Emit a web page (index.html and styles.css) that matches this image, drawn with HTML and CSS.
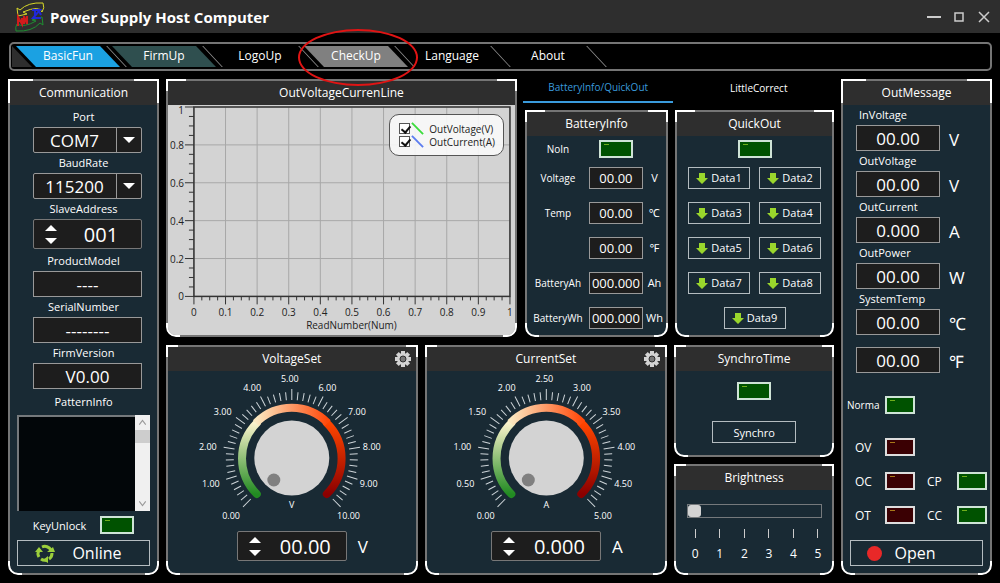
FILE: index.html
```html
<!DOCTYPE html>
<html lang="en">
<head>
  <meta charset="UTF-8">
  <title>Power Supply Host Computer</title>
  <link rel="stylesheet" href="styles.css">
</head>
<body>
  <header class="titlebar">
    <svg class="logo" viewBox="0 0 30 30" fill="none">
      <path d="M3 14 L2 6 L5 8 Q13 0 28 1 Q30 6 27 10 Q25 3 8 10 L12 12 Z" stroke="#d8d82a"/>
      <path d="M27 15 L28 23 L25 21 Q17 30 1 29 Q0 25 2 22 Q9 26 21 19 L17 18 Z" stroke="#1e8f32"/>
      <path d="M3 24 V15 L7 22 V16 M9 22 V14 L12 22 V14 M2 19 H12" stroke="#d01c1c" stroke-width="2"/>
      <path d="M17 8 H25 L18 16 H26 M20 7 V17 M23 7 L26 13" stroke="#2028d8" stroke-width="2"/>
    </svg>
    <h1>Power Supply Host Computer</h1>
    <div class="window-buttons">
      <button aria-label="Minimize"><svg viewBox="0 0 16 16"><path d="M1 8 H15" stroke-width="2"/></svg></button>
      <button aria-label="Maximize"><svg viewBox="0 0 16 16"><rect x="4" y="4" width="8" height="8"/></svg></button>
      <button aria-label="Close"><svg viewBox="0 0 16 16"><path d="M3 3 L13 13 M13 3 L3 13"/></svg></button>
    </div>
  </header>

  <nav class="menu">
    <span class="menu-start"></span>
    <ul>
      <li><button class="menu-tab active">BasicFun</button></li>
      <li><button class="menu-tab visited">FirmUp</button></li>
      <li><button class="menu-tab">LogoUp</button></li>
      <li><button class="menu-tab hover">CheckUp</button><span class="marker"></span></li>
      <li><button class="menu-tab">Language</button></li>
      <li><button class="menu-tab">About</button></li>
    </ul>
  </nav>

  <main>
    <section class="panel side comm">
      <h2>Communication</h2>
      <label for="port">Port</label>
      <div class="combo">
        <select id="port"><option>COM7</option></select>
        <svg viewBox="0 0 12 6"><path d="M0 0 H12 L6 6 Z"/></svg>
      </div>
      <label for="baud">BaudRate</label>
      <div class="combo">
        <select id="baud"><option>115200</option></select>
        <svg viewBox="0 0 12 6"><path d="M0 0 H12 L6 6 Z"/></svg>
      </div>
      <label for="slave">SlaveAddress</label>
      <div class="spin">
        <div class="spin-buttons">
          <button aria-label="Up"><svg viewBox="0 0 12 6"><path d="M0 6 H12 L6 0 Z"/></svg></button>
          <button aria-label="Down"><svg viewBox="0 0 12 6"><path d="M0 0 H12 L6 6 Z"/></svg></button>
        </div>
        <input id="slave" value="001">
      </div>
      <label for="model">ProductModel</label>
      <input class="value big" id="model" value="----" readonly>
      <label for="serial">SerialNumber</label>
      <input class="value big" id="serial" value="--------" readonly>
      <label for="firm">FirmVersion</label>
      <input class="value big" id="firm" value="V0.00" readonly>
      <label for="pattern" class="pattern-label">PatternInfo</label>
      <div class="pattern">
        <textarea id="pattern" readonly></textarea>
        <div class="scrollbar">
          <svg viewBox="0 0 14 14"><path d="M4 9 L7 5 L10 9"/></svg>
          <span class="scroll-thumb"></span>
          <svg viewBox="0 0 14 14"><path d="M4 5 L7 9 L10 5"/></svg>
        </div>
      </div>
      <div class="key-row"><span>KeyUnlock</span><span class="led"></span></div>
      <button class="box-button wide">
        <svg viewBox="0 0 20 20" fill="none" stroke="#9ccf3c" stroke-width="3">
          <path d="M4 14 A7 7 0 0 1 4 7"/>
          <path d="M7 4 A7 7 0 0 1 16 7"/>
          <path d="M17 10 A7 7 0 0 1 14 16"/>
          <path d="M12 17 A7 7 0 0 1 6 16"/>
          <path d="M0 9 L4 4 L8 9 Z M12 9 H20 L18 4 Z M13 13 V20 L8 17 Z" fill="#9ccf3c" stroke="none"/>
        </svg>
        <span>Online</span>
      </button>
    </section>

    <div class="center">
      <div class="row-top">
        <section class="panel chart-panel">
          <h2>OutVoltageCurrenLine</h2>
          <svg class="chart" id="chart" viewBox="0 0 348 229"></svg>
          <div class="legend">
            <label><input type="checkbox" checked><svg viewBox="0 0 14 14"><path d="M1 1 L13 13" stroke="#3bdc3b"/></svg>OutVoltage(V)</label>
            <label><input type="checkbox" checked><svg viewBox="0 0 14 14"><path d="M1 1 L13 13" stroke="#5b7cf0"/></svg>OutCurrent(A)</label>
          </div>
        </section>

        <div class="quick">
          <div class="tabs">
            <button class="active">BatteryInfo/QuickOut</button>
            <button>LittleCorrect</button>
          </div>
          <div class="quick-panels">
            <section class="panel">
              <h2>BatteryInfo</h2>
              <div class="battery">
                <span>NoIn</span><span class="led"></span><span></span>
                <label for="bv">Voltage</label><input class="value" id="bv" value="00.00" readonly><span>V</span>
                <label for="bc">Temp</label><input class="value" id="bc" value="00.00" readonly><span>℃</span>
                <span></span><input class="value" aria-label="Temp F" value="00.00" readonly><span>℉</span>
                <label for="bah">BatteryAh</label><input class="value" id="bah" value="000.000" readonly><span>Ah</span>
                <label for="bwh">BatteryWh</label><input class="value" id="bwh" value="000.000" readonly><span>Wh</span>
              </div>
            </section>
            <section class="panel">
              <h2>QuickOut</h2>
              <div class="data-buttons" id="dataButtons">
                <span class="led"></span>
              </div>
            </section>
          </div>
        </div>
      </div>

      <div class="row-bottom">
        <section class="panel">
          <h2>VoltageSet</h2>
          <button class="gear" aria-label="Voltage settings"></button>
          <svg class="gauge" data-max="10" data-unit="V" viewBox="0 0 236 160"></svg>
          <div class="set-row">
            <div class="spin">
              <div class="spin-buttons">
                <button aria-label="Up"><svg viewBox="0 0 12 6"><path d="M0 6 H12 L6 0 Z"/></svg></button>
                <button aria-label="Down"><svg viewBox="0 0 12 6"><path d="M0 0 H12 L6 6 Z"/></svg></button>
              </div>
              <input aria-label="Voltage" value="00.00">
            </div>
            <span>V</span>
          </div>
        </section>
        <section class="panel">
          <h2>CurrentSet</h2>
          <button class="gear" aria-label="Current settings"></button>
          <svg class="gauge" data-max="5" data-unit="A" viewBox="0 0 236 160"></svg>
          <div class="set-row">
            <div class="spin">
              <div class="spin-buttons">
                <button aria-label="Up"><svg viewBox="0 0 12 6"><path d="M0 6 H12 L6 0 Z"/></svg></button>
                <button aria-label="Down"><svg viewBox="0 0 12 6"><path d="M0 0 H12 L6 6 Z"/></svg></button>
              </div>
              <input aria-label="Current" value="0.000">
            </div>
            <span>A</span>
          </div>
        </section>
        <div class="stack">
          <section class="panel synchro">
            <h2>SynchroTime</h2>
            <span class="led"></span>
            <button class="box-button">Synchro</button>
          </section>
          <section class="panel brightness">
            <h2><label for="bright">Brightness</label></h2>
            <input type="range" id="bright" min="0" max="5" value="0">
            <div class="scale">
              <span>0</span><span>1</span><span>2</span><span>3</span><span>4</span><span>5</span>
            </div>
          </section>
        </div>
      </div>
    </div>

    <section class="panel side out">
      <h2>OutMessage</h2>
      <div class="readings">
        <label for="iv">InVoltage</label>
        <input class="value big" id="iv" value="00.00" readonly><span>V</span>
        <label for="ov">OutVoltage</label>
        <input class="value big" id="ov" value="00.00" readonly><span>V</span>
        <label for="oc">OutCurrent</label>
        <input class="value big" id="oc" value="0.000" readonly><span>A</span>
        <label for="op">OutPower</label>
        <input class="value big" id="op" value="00.00" readonly><span>W</span>
        <label for="st">SystemTemp</label>
        <input class="value big" id="st" value="00.00" readonly><span>℃</span>
        <input class="value big last" aria-label="SystemTemp F" value="00.00" readonly><span class="last">℉</span>
      </div>
      <div class="norma"><span>Norma</span><span class="led"></span></div>
      <div class="flags">
        <span>OV</span><span class="led red"></span><span></span><span></span>
        <span>OC</span><span class="led red"></span><span>CP</span><span class="led"></span>
        <span>OT</span><span class="led red"></span><span>CC</span><span class="led"></span>
      </div>
      <button class="box-button wide"><span class="dot"></span><span>Open</span></button>
    </section>
  </main>

  <script>
    // chart grid and axes
    const chart = document.getElementById('chart');
    const left = 26, right = 343, top0 = 2, bottom = 192;
    let out = '';
    for (let i = 0; i <= 40; i++) {
      const x = left + (right - left) * i / 40;
      const major = i % 4 === 0;
      if (major) {
        out += `<path class="grid" d="M${x} ${top0} V${bottom}"/>`;
        out += `<text x="${x}" y="212" text-anchor="middle">${i / 40}</text>`;
      }
      out += `<path class="tick" d="M${x} ${bottom} v${major ? 8 : 4}"/>`;
    }
    for (let i = 0; i <= 20; i++) {
      const y = bottom - (bottom - top0) * i / 20;
      const major = i % 4 === 0;
      if (major) {
        out += `<path class="grid" d="M${left} ${y} H${right}"/>`;
        out += `<text x="16" y="${Math.max(y + 4, 9)}" text-anchor="end">${i / 20}</text>`;
      }
      out += `<path class="tick" d="M${left} ${y} h${major ? -9 : -5}"/>`;
    }
    out += `<rect class="frame" x="${left}" y="${top0}" width="${right - left}" height="${bottom - top0}"/>`;
    out += '<text x="184" y="225" text-anchor="middle">ReadNumber(Num)</text>';
    chart.innerHTML = out;

    // round gauges
    document.querySelectorAll('.gauge').forEach(gauge => {
      const max = Number(gauge.dataset.max);
      const unit = gauge.dataset.unit;
      let html = `
        <defs>
          <linearGradient id="low${unit}" gradientUnits="userSpaceOnUse" x1="0" y1="36" x2="0" y2="-35">
            <stop offset="0" stop-color="#228b22"/><stop offset="1" stop-color="#fbf3cc"/>
          </linearGradient>
          <linearGradient id="mid${unit}" gradientUnits="userSpaceOnUse" x1="-35" y1="0" x2="35" y2="0">
            <stop offset="0" stop-color="#fbe8c0"/><stop offset="1" stop-color="#ff4a0c"/>
          </linearGradient>
          <linearGradient id="high${unit}" gradientUnits="userSpaceOnUse" x1="0" y1="-35" x2="0" y2="36">
            <stop offset="0" stop-color="#ff4500"/><stop offset="1" stop-color="#8b0000"/>
          </linearGradient>
        </defs>
        <g transform="translate(118 87)">
          <g fill="none" stroke-width="8">
            <path stroke-linecap="round" stroke="url(#low${unit})" d="M-35 36 A50 50 0 0 1 -35 -35"/>
            <path stroke-linecap="round" stroke="url(#high${unit})" d="M35 -35 A50 50 0 0 1 35 36"/>
            <path stroke="url(#mid${unit})" d="M-36 -35 A50 50 0 0 1 36 -35"/>
          </g>
          <circle r="37.5" fill="#d3d3d3"/>
          <circle cx="-18" cy="22" r="6.5" fill="#808080"/>
          <text y="50">${unit}</text>`;
      for (let i = 0; i <= 50; i++) {
        const a = -135 + i * 5.4;
        const major = i % 5 === 0;
        html += `<path class="gauge-tick" transform="rotate(${a})" d="M0 -58 V${major ? -69 : -66}"/>`;
        if (major) {
          const rad = a * Math.PI / 180;
          const x = 83 * Math.sin(rad) - 2;
          const y = -80 * Math.cos(rad) + 4;
          html += `<text x="${x}" y="${y}">${(max * i / 50).toFixed(2)}</text>`;
        }
      }
      gauge.innerHTML = html + '</g>';
    });

    // gear icons
    document.querySelectorAll('.gear').forEach(gear => {
      let teeth = '';
      for (let a = 0; a < 360; a += 45) {
        teeth += `<rect x="-2" y="-8" width="4" height="5" transform="rotate(${a})"/>`;
      }
      gear.innerHTML = `<svg viewBox="-8 -8 16 16" fill="#d3d3d3">${teeth}
        <circle r="6"/><circle r="3" fill="#777" stroke="#2e2e2e" stroke-width="1"/></svg>`;
    });

    // Data1 - Data9
    const dataButtons = document.getElementById('dataButtons');
    for (let i = 1; i <= 9; i++) {
      dataButtons.insertAdjacentHTML('beforeend',
        `<button class="box-button"><svg viewBox="0 0 12 12"><path d="M3 1 H9 V6 H12 L6 12 L0 6 H3 Z"/></svg>Data${i}</button>`);
    }
  </script>
</body>
</html>
```
FILE: styles.css
```css
* {
  box-sizing: border-box;
}

body {
  display: flex;
  flex-direction: column;
  min-height: 100vh;
  margin: 0;
  background-color: #000;
  color: #fff;
  font-family: "Open Sans", "Noto Sans", "Noto Sans CJK SC", sans-serif;
  font-size: 11px;
}

button,
input,
select,
textarea {
  margin: 0;
  padding: 0;
  border: none;
  border-radius: 0;
  background: none;
  color: inherit;
  font: inherit;
}

button {
  cursor: pointer;
}

/* title bar */
.titlebar {
  display: flex;
  align-items: center;
  height: 33px;
  padding: 0 8px 0 15px;
  background-color: #2e2e2e;
}

.logo {
  width: 30px;
  height: 30px;
}

h1 {
  flex: 1;
  margin: 0 0 0 5px;
  font-size: 15px;
  font-weight: bold;
}

.window-buttons {
  display: flex;
  gap: 9px;
}

.window-buttons button {
  display: flex;
}

.window-buttons svg {
  width: 16px;
  height: 16px;
  fill: none;
  stroke: #ccc;
  stroke-width: 1.5;
}

/* menu */
.menu {
  display: flex;
  height: 29px;
  margin: 9px 8px 8px 9px;
  padding: 2px 1px;
  border: 2px solid #757575;
  border-radius: 5px;
  font-size: 12px;
}

.menu-start {
  width: 20px;
  height: 21px;
  margin-right: -16px;
  background-color: #2e2e2e;
  clip-path: polygon(0 0, 100% 100%, 0 100%);
}

.menu ul {
  display: flex;
  margin: 0;
  padding: 0;
  list-style: none;
}

.menu li {
  position: relative;
  width: 96px;
}

.menu li::after {
  content: "";
  position: absolute;
  top: 0;
  right: -5px;
  width: 1px;
  height: 21px;
  background-color: #999;
  transform: skewX(43deg);
}

.menu-tab {
  width: 104px;
  height: 21px;
  padding-bottom: 2px;
  clip-path: polygon(0 0, 84px 0, 100% 100%, 20px 100%);
}

.menu-tab.active {
  background-color: #1ba1e2;
}

.menu-tab.visited {
  background-color: #2f4f4f;
}

.menu-tab.hover {
  background-color: #808080;
}

.marker {
  position: absolute;
  top: -17px;
  left: -6px;
  z-index: 2;
  width: 120px;
  height: 57px;
  border: 2px solid #e01414;
  border-radius: 50%;
  pointer-events: none;
}

/* layout */
main {
  flex: 1;
  display: grid;
  grid-template-columns: 151px 1fr 151px;
  gap: 7px;
  padding: 0 8px 8px;
}

.center,
.quick {
  display: flex;
  flex-direction: column;
}

.center {
  gap: 8px;
  min-width: 0;
}

.row-top {
  display: grid;
  grid-template-columns: 352fr 312fr;
  gap: 6px;
}

.row-bottom {
  flex: 1;
  display: grid;
  grid-template-columns: 252fr 243fr 160fr;
  gap: 7px;
}

.quick-panels {
  flex: 1;
  display: grid;
  grid-template-columns: 144fr 160fr;
  gap: 7px;
  margin-left: 2px;
}

.stack {
  display: grid;
  grid-template-rows: 1fr 1fr;
  gap: 7px;
}

/* panel with bright corners */
.panel {
  --top-w: 12px;
  --top-h: 12px;
  position: relative;
  display: flex;
  flex-direction: column;
  min-width: 0;
  border: 2px solid #757575;
  border-radius: 3px 3px 10px 10px;
  background-color: #192a34;
}

.panel::after {
  content: "";
  position: absolute;
  inset: -2px;
  border: 2px solid #fff;
  border-radius: 0 0 10px 10px;
  pointer-events: none;
  mask:
    linear-gradient(#000 0 0) 0 0 / var(--top-w) var(--top-h) no-repeat,
    linear-gradient(#000 0 0) 100% 0 / var(--top-w) var(--top-h) no-repeat,
    linear-gradient(#000 0 0) 0 100% / 14px 14px no-repeat,
    linear-gradient(#000 0 0) 100% 100% / 14px 14px no-repeat;
}

.panel.side {
  --top-w: 25px;
  --top-h: 24px;
}

.row-top .panel {
  --top-w: 20px;
}

h2 {
  height: 24px;
  margin: 0;
  background-color: #2e2e2e;
  font-size: 12px;
  font-weight: normal;
  line-height: 24px;
  text-align: center;
}

/* shared controls */
.value {
  width: 100%;
  height: 22px;
  border: 1px solid #999;
  background-color: #1d1d1d;
  font-size: 13px;
  text-align: center;
}

.value.big {
  height: 26px;
  font-size: 17px;
}

.led {
  width: 34px;
  height: 18px;
  border: 2px solid #cfe3d6;
  background: linear-gradient(#6fae1a 0 0) 3px 2px / 5px 1px no-repeat #005200;
}

.led.red {
  border-color: #ddd;
  background: linear-gradient(#a87818 0 0) 3px 2px / 5px 1px no-repeat #3a0003;
}

.box-button {
  display: flex;
  align-items: center;
  justify-content: center;
  height: 22px;
  border: 1px solid #b4bcc0;
  font-size: 12px;
}

.box-button.wide {
  height: 26px;
  margin: 0 7px;
  font-size: 16px;
}

.spin {
  display: flex;
  align-items: center;
  height: 30px;
  border: 1px solid #777;
  border-radius: 2px;
  background-color: #1d1d1d;
}

.spin-buttons {
  display: flex;
  flex-direction: column;
  gap: 7px;
  margin-left: 11px;
}

.spin-buttons button {
  display: flex;
}

.spin-buttons svg,
.combo svg {
  width: 12px;
  height: 6px;
  fill: #fff;
}

.spin input {
  flex: 1;
  min-width: 0;
  padding-left: 4px;
  font-size: 20px;
  text-align: center;
}

/* communication */
.comm h2 {
  margin-bottom: 2px;
}

.comm label {
  line-height: 20px;
  text-align: center;
}

.comm .combo,
.comm .spin,
.comm .value {
  width: auto;
  margin: 0 15px 0 23px;
}

.comm .spin {
  margin-bottom: 2px;
}

.combo {
  position: relative;
}

.combo select {
  width: 100%;
  height: 26px;
  padding-right: 26px;
  border: 1px solid #999;
  border-radius: 2px;
  background: linear-gradient(#999 0 0) calc(100% - 24px) 0 / 1px 100% no-repeat #1d1d1d;
  font-size: 17px;
  text-align-last: center;
  appearance: none;
}

.combo svg {
  position: absolute;
  top: 10px;
  right: 7px;
  pointer-events: none;
}

.comm .pattern-label {
  margin-top: 3px;
}

.pattern {
  display: flex;
  height: 96px;
  margin: 3px 7px 5px;
}

.pattern textarea {
  flex: 1;
  min-width: 0;
  border: 2px solid #75797c;
  border-width: 2px 0 0 2px;
  background-color: #020609;
  resize: none;
}

.scrollbar {
  display: flex;
  flex-direction: column;
  width: 15px;
  background-color: #f0f0f0;
}

.scrollbar svg {
  fill: none;
  stroke: #999;
}

.scroll-thumb {
  height: 13px;
  margin-bottom: auto;
  background-color: #cdcdcd;
}

.key-row {
  display: flex;
  align-items: center;
  justify-content: center;
  gap: 14px;
  margin-bottom: 6px;
}

.comm .wide {
  gap: 17px;
  padding-right: 10px;
}

.comm .wide svg {
  width: 20px;
  height: 20px;
}

/* chart */
.chart-panel {
  background-color: #d3d3d3;
}

.chart {
  width: 100%;
}

.chart text {
  fill: #222;
  font-size: 10px;
}

.chart path {
  fill: none;
}

.chart .grid {
  stroke: #a8a8a8;
}

.chart .tick {
  stroke: #333;
}

.chart .frame {
  fill: none;
  stroke: #333;
  stroke-width: 1.5;
}

.legend {
  position: absolute;
  top: 33px;
  right: 11px;
  padding: 7px 8px 7px 9px;
  border: 1px solid #555;
  border-radius: 10px;
  background-color: rgba(250, 250, 250, 0.9);
  color: #222;
  font-size: 10px;
}

.legend label {
  display: flex;
  align-items: center;
  height: 13px;
}

.legend input {
  width: 11px;
  height: 11px;
  border: 1px solid #555;
  background-color: #fff;
  appearance: none;
}

.legend input:checked::before {
  content: "";
  display: block;
  width: 4px;
  height: 7px;
  margin-left: 3px;
  border: solid #111;
  border-width: 0 2px 2px 0;
  transform: rotate(40deg);
}

.legend svg {
  width: 13px;
  height: 13px;
  margin: 0 5px 0 1px;
  stroke-width: 2;
}

/* tabs */
.tabs {
  display: grid;
  grid-template-columns: 151fr 161fr;
  height: 24px;
  margin-bottom: 7px;
}

.tabs button {
  padding-bottom: 7px;
  font-size: 10px;
}

.tabs button:last-child {
  padding-left: 10px;
}

.tabs .active {
  border-bottom: 2px solid #3a9bdc;
  color: #3a9bdc;
}

.battery {
  display: grid;
  grid-template-columns: 62px 54px 1fr;
  grid-template-rows: 22px;
  grid-auto-rows: 35px;
  align-items: center;
  justify-items: center;
  font-size: 10px;
}

.battery > span:nth-child(3n) {
  font-size: 11px;
}

.data-buttons {
  display: grid;
  grid-template-columns: 62px 62px;
  grid-template-rows: 22px;
  grid-auto-rows: 35px;
  column-gap: 9px;
  align-items: center;
  justify-content: center;
}

.data-buttons .led,
.data-buttons .box-button:last-child {
  grid-column: 1 / 3;
  justify-self: center;
}

.data-buttons .box-button {
  gap: 3px;
  font-size: 11px;
}

.data-buttons .box-button:last-child {
  width: 62px;
}

.data-buttons svg {
  width: 12px;
  height: 12px;
  fill: #9ad62c;
}

.battery,
.data-buttons {
  padding-top: 2px;
}

/* gauges */
.gear {
  position: absolute;
  top: 4px;
  right: 5px;
  display: flex;
}

.gear svg {
  width: 16px;
  height: 16px;
}

.gauge {
  width: 100%;
  height: 160px;
}

.gauge text {
  fill: #fff;
  font-size: 9px;
  text-anchor: middle;
}

.gauge-tick {
  stroke: #cfd6da;
}

.set-row {
  display: grid;
  grid-template-columns: 1fr 110px 1fr;
  align-items: center;
  font-size: 17px;
}

.set-row .spin {
  grid-column: 2;
}

.set-row > span {
  padding-left: 11px;
}

/* synchro and brightness */
.synchro {
  align-items: center;
}

.synchro h2 {
  align-self: stretch;
}

.synchro .led {
  margin: 11px 0 21px;
}

.synchro .box-button {
  width: 84px;
  font-size: 11px;
}

.brightness input {
  height: 14px;
  margin: 14px 10px 11px 11px;
  border: 1px solid #75797c;
  appearance: none;
}

.brightness input::-webkit-slider-thumb {
  width: 13px;
  height: 12px;
  border-radius: 3px;
  background-color: #d3d3d3;
  appearance: none;
}

.scale {
  display: flex;
  justify-content: space-between;
  margin: 0 8px 0 13px;
  font-size: 12px;
}

.scale span {
  width: 12px;
  text-align: center;
}

.scale span::before {
  content: "";
  display: block;
  width: 1px;
  height: 9px;
  margin: 0 auto 7px;
  background-color: #ccc;
}

/* out message */
.readings {
  display: grid;
  grid-template-columns: 84px 1fr;
  column-gap: 9px;
  margin: 0 7px 0 13px;
  align-items: center;
  font-size: 17px;
}

.readings label {
  grid-column: 1 / 3;
  padding-left: 3px;
  font-size: 11px;
  line-height: 20px;
}

.readings > span {
  height: 22px;
  line-height: 26px;
}

.readings .last {
  margin-top: 12px;
}

.norma,
.flags {
  display: grid;
  grid-template-columns: 42px 30px 42px 30px;
  align-items: center;
}

.norma {
  margin: 23px 0 16px;
  font-size: 10px;
}

.norma span:first-child {
  padding-left: 4px;
}

.flags {
  grid-auto-rows: 34px;
  font-size: 12px;
}

.flags > span:nth-child(odd) {
  padding-left: 12px;
}

.out .led {
  width: 30px;
}

.out .wide {
  gap: 12px;
  margin-top: 8px;
  padding-right: 30px;
}

.dot {
  width: 15px;
  height: 15px;
  border-radius: 50%;
  background-color: #e82828;
}
```
